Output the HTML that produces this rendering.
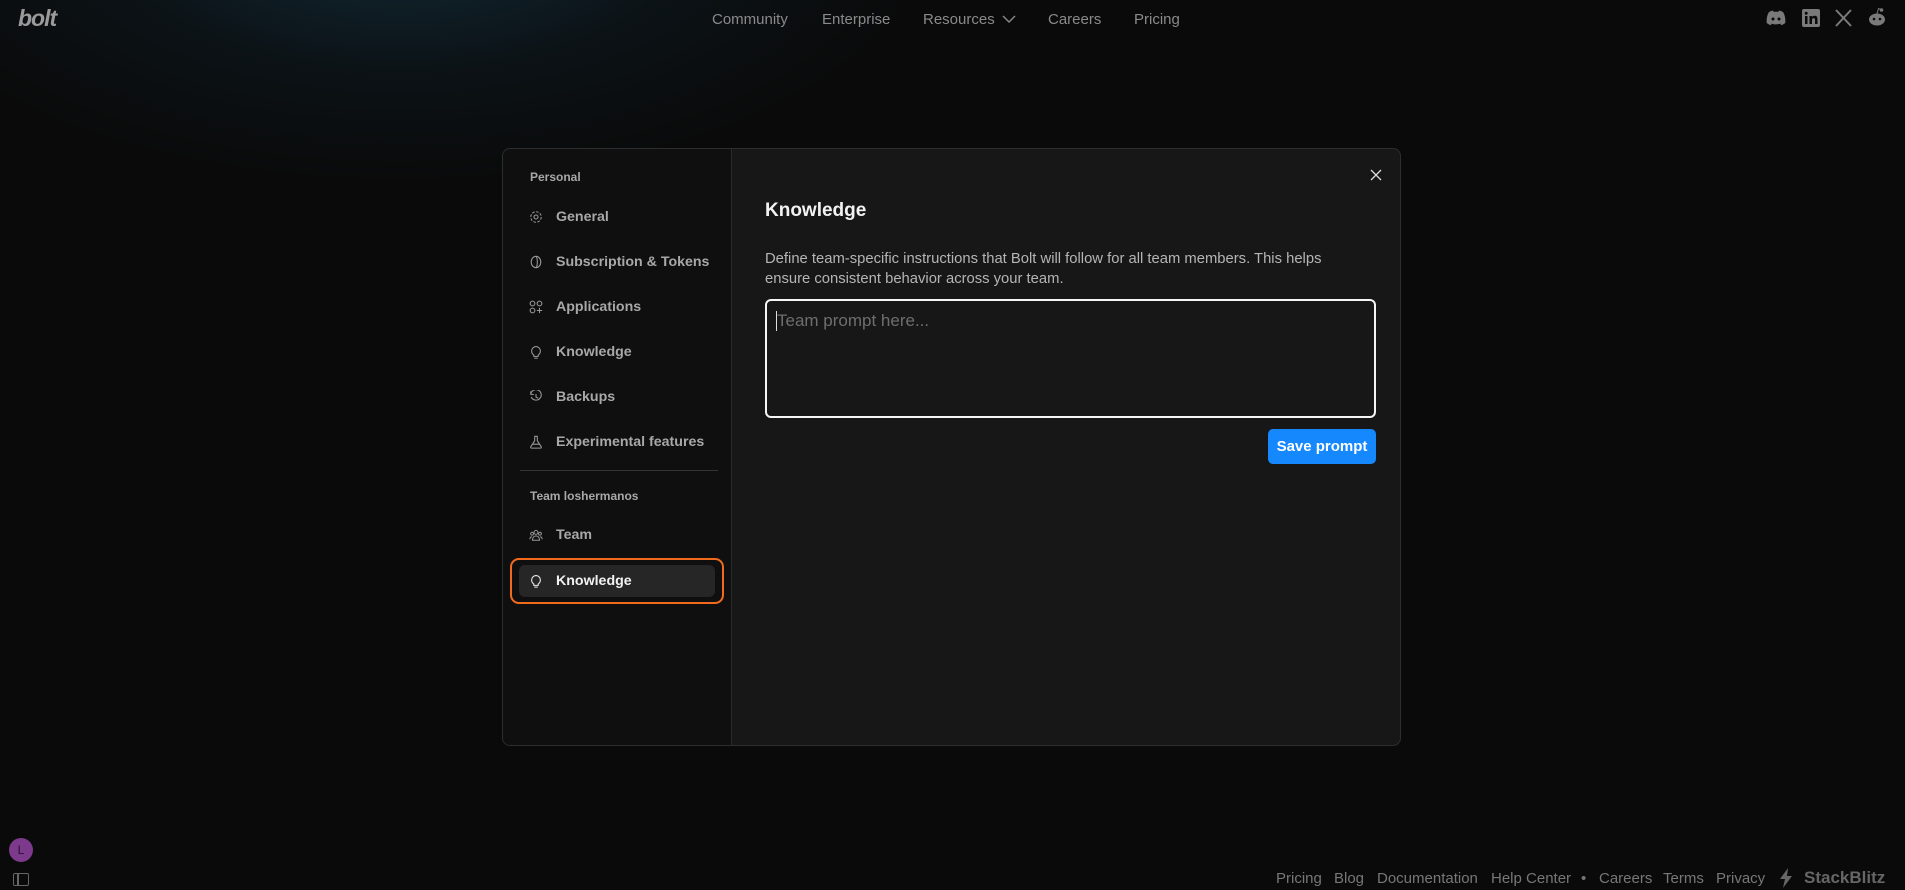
<!DOCTYPE html>
<html><head><meta charset="utf-8"><style>
*{box-sizing:border-box;margin:0;padding:0}
body{width:1905px;height:890px;overflow:hidden;background:#0a0a0a;font-family:"Liberation Sans",sans-serif;position:relative;color:#ddd}
.glow{position:absolute;left:-150px;top:-330px;width:1100px;height:520px;border-radius:50%;background:radial-gradient(ellipse at center,rgba(22,55,72,.7) 0%,rgba(14,32,42,.35) 40%,rgba(10,10,10,0) 70%)}
.abs{position:absolute}
.nav{position:absolute;top:11px;font-size:15px;color:#8a8a8a}
.logo{left:18px;top:5px;font-size:23px;font-weight:bold;font-style:italic;color:#9a9a9a;letter-spacing:-1px}
.modal{position:absolute;left:502px;top:148px;width:899px;height:598px;border:1px solid #2e2e2e;border-radius:8px;background:#171717;overflow:hidden}
.side{position:absolute;left:0;top:0;width:229px;height:100%;background:#0f0f0f;border-right:1px solid #2a2a2a}
.sec{position:absolute;left:27px;font-size:12px;font-weight:bold;color:#a8a8a8}
.item{position:absolute;left:53px;font-size:14.2px;font-weight:bold;color:#a8a8a8}
.ic{position:absolute;left:26px;width:14px;height:14px}
.foot{position:absolute;top:870px;font-size:15px;color:#777}
</style></head><body>
<div class="glow"></div>
<div class="abs logo">bolt</div>
<div class="nav" style="left:712px">Community</div>
<div class="nav" style="left:822px">Enterprise</div>
<div class="nav" style="left:923px">Resources <svg width="14" height="9" viewBox="0 0 14 9" style="margin-left:3px"><path d="M1 1l6 6 6-6" stroke="#8a8a8a" fill="none" stroke-width="1.4"/></svg></div>
<div class="nav" style="left:1048px">Careers</div>
<div class="nav" style="left:1134px">Pricing</div>
<svg class="abs" style="left:1766px;top:10px" width="20" height="16" viewBox="0 0 20 16"><path d="M3 2c3-1.5 4-1.5 4-1.5l.6 1.2h4.8l.6-1.2s1 0 4 1.5c2 3 2.6 7 2.3 11-2 1.6-4 2.2-4 2.2l-1-1.6c-3 1-5.6 1-8.6 0l-1 1.6s-2-.6-4-2.2C.4 9 1 5 3 2z" fill="#7a7a7a"/><circle cx="7" cy="9" r="1.5" fill="#0a0a0a"/><circle cx="13" cy="9" r="1.5" fill="#0a0a0a"/></svg>
<svg class="abs" style="left:1802px;top:9px" width="18" height="18" viewBox="0 0 18 18"><rect width="18" height="18" rx="2" fill="#7a7a7a"/><rect x="3" y="7" width="2.5" height="8" fill="#0a0a0a"/><circle cx="4.2" cy="4.2" r="1.5" fill="#0a0a0a"/><path d="M7.5 7h2.4v1.2c.5-.9 1.6-1.4 2.8-1.4 2 0 2.8 1.3 2.8 3.5V15h-2.5v-4.2c0-1-.3-1.7-1.3-1.7s-1.7.7-1.7 1.8V15H7.5z" fill="#0a0a0a"/></svg>
<svg class="abs" style="left:1835px;top:9px" width="17" height="18" viewBox="0 0 17 18"><path d="M1 1l15 16M16 1L1 17" stroke="#7a7a7a" stroke-width="2"/></svg>
<svg class="abs" style="left:1867px;top:7px" width="20" height="20" viewBox="0 0 20 20"><ellipse cx="10" cy="12.5" rx="8" ry="6" fill="#7a7a7a"/><circle cx="14.5" cy="3" r="1.8" fill="#7a7a7a"/><path d="M10 6.5l1.5-5 3 1.3" stroke="#7a7a7a" fill="none"/><circle cx="7" cy="12" r="1.3" fill="#0a0a0a"/><circle cx="13" cy="12" r="1.3" fill="#0a0a0a"/></svg>

<div class="modal">
 <div class="side">
  <div class="sec" style="top:21px">Personal</div>
  <svg class="ic" style="top:61px" viewBox="0 0 16 16"><circle cx="8" cy="8" r="2.3" stroke="#999" fill="none" stroke-width="1.2"/><circle cx="8" cy="8" r="6" stroke="#999" fill="none" stroke-width="1.2" stroke-dasharray="3 1.7"/></svg>
  <div class="item" style="top:60px">General</div>
  <svg class="ic" style="top:106px" viewBox="0 0 16 16"><ellipse cx="8" cy="8" rx="5.5" ry="6.5" stroke="#999" fill="none" stroke-width="1.2"/><path d="M8 1.5c2 2 2 11 0 13" stroke="#999" fill="none" stroke-width="1.2"/></svg>
  <div class="item" style="top:105px">Subscription &amp; Tokens</div>
  <svg class="ic" style="top:151px" viewBox="0 0 16 16"><circle cx="4" cy="4" r="2.7" stroke="#999" fill="none" stroke-width="1.2"/><circle cx="12" cy="4" r="2.7" stroke="#999" fill="none" stroke-width="1.2"/><circle cx="4" cy="12" r="2.7" stroke="#999" fill="none" stroke-width="1.2"/><path d="M12 9v6M9 12h6" stroke="#999" stroke-width="1.2"/></svg>
  <div class="item" style="top:150px">Applications</div>
  <svg class="ic" style="top:196px" viewBox="0 0 16 16"><path d="M5.5 11.5C4 10.3 3 8.8 3 6.8a5 5 0 0110 0c0 2-1 3.5-2.5 4.7v1.5h-5zM6 15h4" stroke="#999" fill="none" stroke-width="1.2"/></svg>
  <div class="item" style="top:195px">Knowledge</div>
  <svg class="ic" style="top:241px" viewBox="0 0 16 16"><path d="M2.5 8A6 6 0 102 5M2 1.5V5h3.5M8 4.5V8l2.5 1.5" stroke="#999" fill="none" stroke-width="1.2"/></svg>
  <div class="item" style="top:240px">Backups</div>
  <svg class="ic" style="top:286px" viewBox="0 0 16 16"><path d="M6 1.5h4M6.5 1.5v5L2 13.5c-.4.8 0 1.5 1 1.5h10c1 0 1.4-.7 1-1.5L9.5 6.5v-5M4 10.5h8" stroke="#999" fill="none" stroke-width="1.2"/></svg>
  <div class="item" style="top:285px">Experimental features</div>
  <div class="abs" style="left:17px;top:321px;width:198px;height:1px;background:#333"></div>
  <div class="sec" style="top:340px">Team loshermanos</div>
  <svg class="ic" style="top:379px" viewBox="0 0 16 16"><circle cx="8" cy="5" r="2.2" stroke="#999" fill="none" stroke-width="1.1"/><circle cx="3.5" cy="6.5" r="1.6" stroke="#999" fill="none" stroke-width="1.1"/><circle cx="12.5" cy="6.5" r="1.6" stroke="#999" fill="none" stroke-width="1.1"/><path d="M4 14c0-3 1.8-5 4-5s4 2 4 5zM1 13c0-2 1-3 2.5-3M15 13c0-2-1-3-2.5-3" stroke="#999" fill="none" stroke-width="1.1"/></svg>
  <div class="item" style="top:378px">Team</div>
  <div class="abs" style="left:7px;top:409px;width:214px;height:46px;border:2px solid #f26b1d;border-radius:9px"></div>
  <div class="abs" style="left:16px;top:416px;width:196px;height:32px;background:#262626;border-radius:6px"></div>
  <svg class="ic" style="top:425px" viewBox="0 0 16 16"><path d="M5.5 11.5C4 10.3 3 8.8 3 6.8a5 5 0 0110 0c0 2-1 3.5-2.5 4.7v1.5h-5zM6 15h4" stroke="#eee" fill="none" stroke-width="1.2"/></svg>
  <div class="item" style="top:424px;color:#f2f2f2">Knowledge</div>
 </div>
 <svg class="abs" style="left:867px;top:20px" width="12" height="12" viewBox="0 0 12 12"><path d="M1 1l10 10M11 1L1 11" stroke="#ddd" stroke-width="1.3"/></svg>
 <div class="abs" style="left:262px;top:51px;font-size:19px;font-weight:bold;color:#f2f2f2">Knowledge</div>
 <div class="abs" style="left:262px;top:100px;font-size:14.8px;line-height:20px;color:#b5b5b5;width:590px">Define team-specific instructions that Bolt will follow for all team members. This helps ensure consistent behavior across your team.</div>
 <div class="abs" style="left:262px;top:150px;width:611px;height:119px;border:2px solid #f5f5f5;border-radius:6px;background:#171717"></div>
 <div class="abs" style="left:273px;top:162px;width:1px;height:20px;background:#ddd"></div>
 <div class="abs" style="left:274px;top:162px;font-size:17px;color:#6e6e6e">Team prompt here...</div>
 <div class="abs" style="left:765px;top:280px;width:108px;height:35px;background:#1488fc;border-radius:5px;color:#fff;font-size:15px;font-weight:bold;text-align:center;line-height:35px">Save prompt</div>
</div>

<div class="abs" style="left:9px;top:838px;width:24px;height:24px;border-radius:50%;background:#7d3a8c;color:#2a0f30;font-size:12px;text-align:center;line-height:24px">L</div>
<div class="abs" style="left:13px;top:873px;width:16px;height:13px;border:1.5px solid #666;border-radius:2px"><div style="position:absolute;left:3px;top:0;width:1.5px;height:100%;background:#666"></div></div>

<div class="foot" style="left:1276px">Pricing</div>
<div class="foot" style="left:1334px">Blog</div>
<div class="foot" style="left:1377px">Documentation</div>
<div class="foot" style="left:1491px">Help Center</div>
<div class="foot" style="left:1581px">•</div>
<div class="foot" style="left:1599px">Careers</div>
<div class="foot" style="left:1663px">Terms</div>
<div class="foot" style="left:1716px">Privacy</div>
<svg class="abs" style="left:1779px;top:868px" width="15" height="20" viewBox="0 0 15 20"><path d="M9 0L1 11h5l-2 9 9-12H8z" fill="#666"/></svg>
<div class="foot" style="left:1804px;top:868px;font-size:17px;font-weight:bold;color:#666">StackBlitz</div>
</body></html>
